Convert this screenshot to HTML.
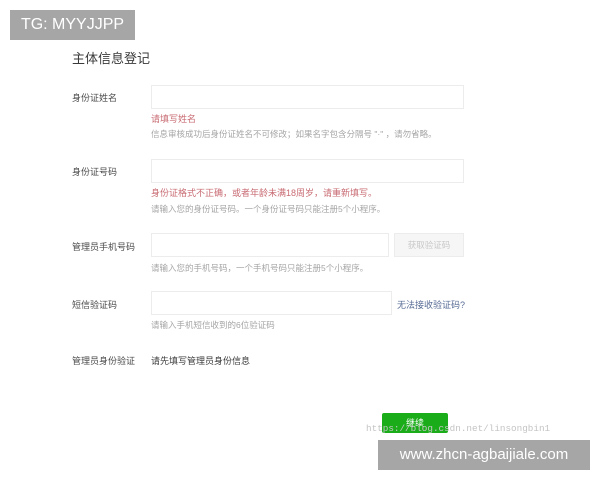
<!DOCTYPE html>
<html><head><meta charset="utf-8"><style>
body{margin:0;width:600px;height:480px;background:#fff;position:relative;overflow:hidden;font-family:"Liberation Sans","Noto Sans CJK SC",sans-serif;}
.a{position:absolute;white-space:nowrap;}
.lbl{font-size:9px;color:#4a4a4a;left:72px;}
.in{position:absolute;border:1px solid #ececec;background:#fff;height:22px;}
.err{font-size:9px;color:#c86b72;left:151px;}
.tip{font-size:8.5px;color:#a5a5a5;left:151px;}
</style></head><body>
<div class="a" style="left:10px;top:10px;width:125px;height:30px;background:#a6a6a6;color:#fff;font-size:16px;line-height:30px;text-align:center">TG: MYYJJPP</div>
<div class="a" style="left:72px;top:48px;font-size:13px;color:#3a3a3a">主体信息登记</div>

<div class="a lbl" style="top:91px">身份证姓名</div>
<div class="in" style="left:151px;top:85px;width:311px"></div>
<div class="a err" style="top:112px">请填写姓名</div>
<div class="a tip" style="top:128px">信息审核成功后身份证姓名不可修改；如果名字包含分隔号 "·" ，请勿省略。</div>

<div class="a lbl" style="top:165px">身份证号码</div>
<div class="in" style="left:151px;top:159px;width:311px"></div>
<div class="a err" style="top:186px">身份证格式不正确，或者年龄未满18周岁，请重新填写。</div>
<div class="a tip" style="top:203px">请输入您的身份证号码。一个身份证号码只能注册5个小程序。</div>

<div class="a lbl" style="top:240px">管理员手机号码</div>
<div class="in" style="left:151px;top:233px;width:236px"></div>
<div class="in" style="left:394px;top:233px;width:68px;background:#f6f6f6;font-size:8.5px;color:#c8c8c8;text-align:center;line-height:22px">获取验证码</div>
<div class="a tip" style="top:262px">请输入您的手机号码，一个手机号码只能注册5个小程序。</div>

<div class="a lbl" style="top:298px">短信验证码</div>
<div class="in" style="left:151px;top:291px;width:239px"></div>
<div class="a" style="left:397px;top:298px;font-size:9px;color:#576b95">无法接收验证码?</div>
<div class="a tip" style="top:319px">请输入手机短信收到的6位验证码</div>

<div class="a lbl" style="top:354px">管理员身份验证</div>
<div class="a" style="left:151px;top:354px;font-size:9px;color:#3a3a3a">请先填写管理员身份信息</div>

<div class="a" style="left:382px;top:413px;width:66px;height:20px;background:#1aad19;border-radius:2px;color:#fff;font-size:9px;text-align:center;line-height:20px">继续</div>
<div class="a" style="left:366px;top:423px;font-family:'Liberation Mono',monospace;font-size:9.3px;color:#c4c4c4">https://blog.csdn.net/linsongbin1</div>
<div class="a" style="left:378px;top:440px;width:212px;height:30px;background:#a6a6a6;color:#fff;font-size:15px;line-height:30px;text-align:center">www.zhcn-agbaijiale.com</div>
</body></html>
